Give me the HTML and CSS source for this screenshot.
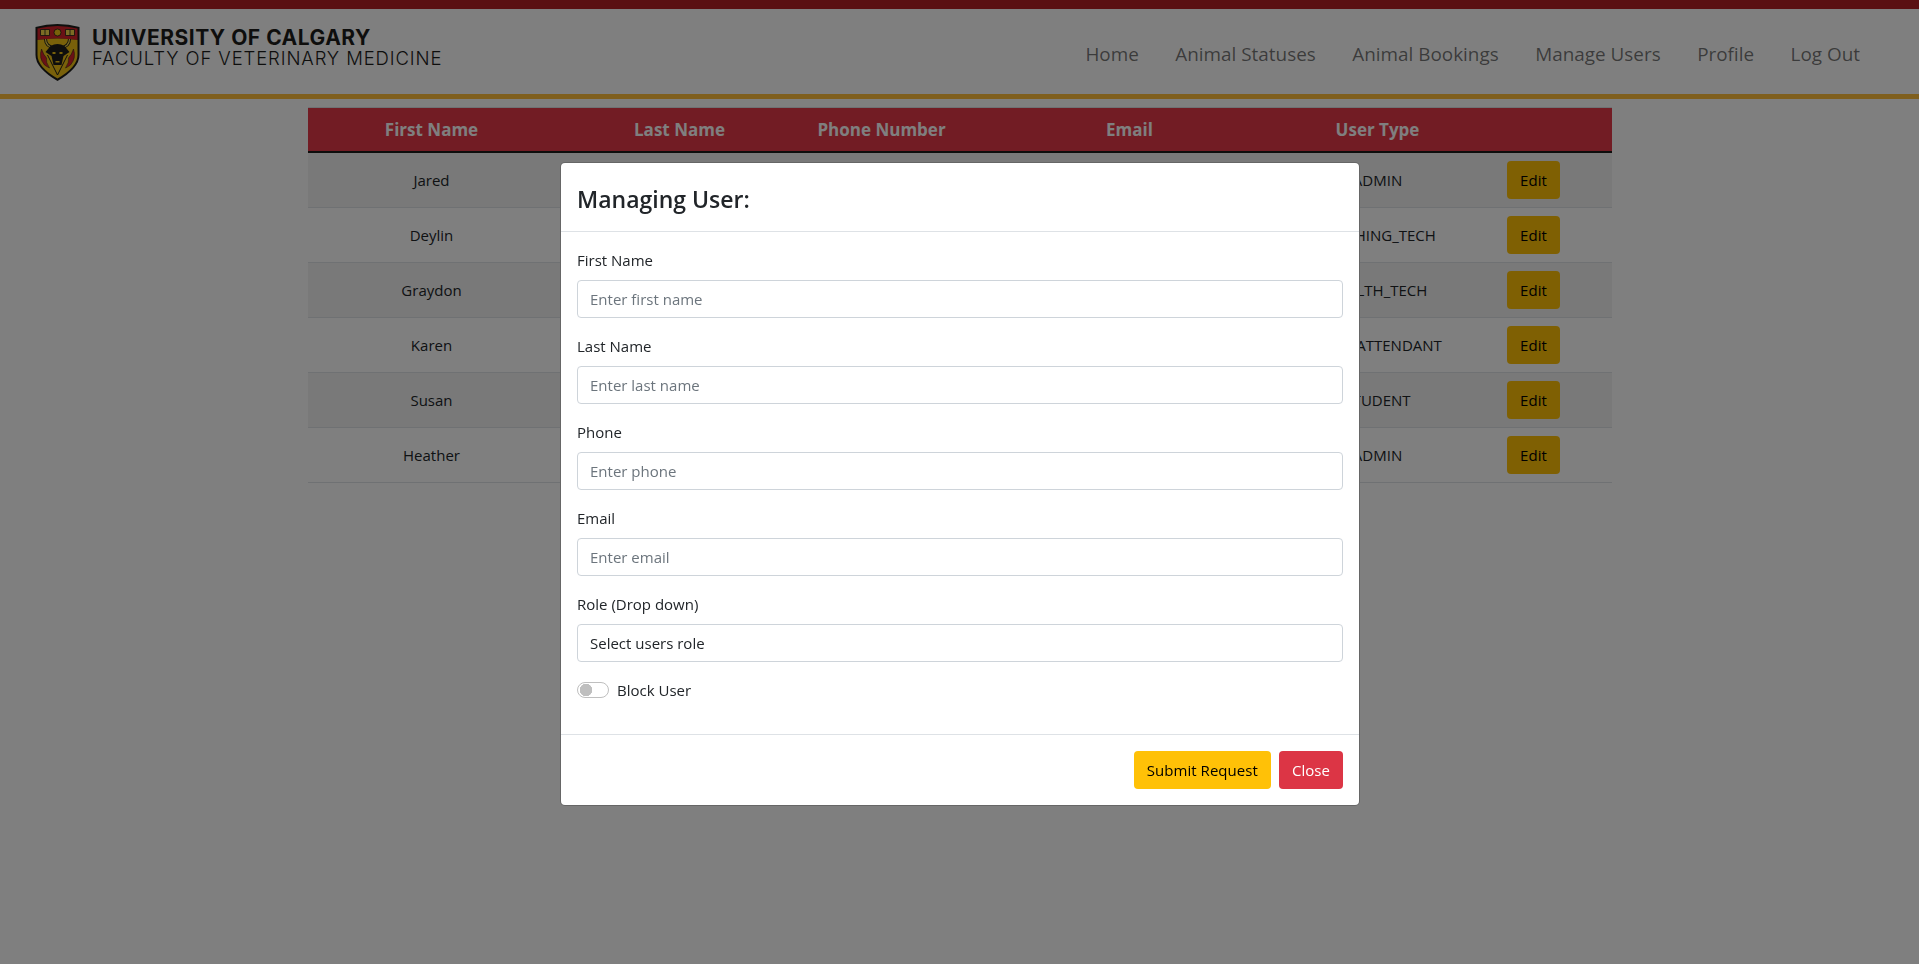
FILE: index.html
```html
<!DOCTYPE html>
<html>
<head>
    <title>Manage Users</title>
    <link rel="stylesheet" href="styles.css">
</head>
<body>
    <div class="top-stripe"></div>
    <header class="site-header">
        <a class="brand" href="#">
            <svg class="crest" viewBox="1 0 44 60" width="47" height="60">
                <path d="M1 5 Q23 -1 45 5 L45 33 Q45 46 23 59 Q1 46 1 33 Z" fill="#1d1d1b"/>
                <path d="M3 6.500 Q23 1.500 43 6.500 L43 18 Q23 15 3 18 Z" fill="#d5232a"/>
                <path d="M3 18 Q23 15 43 18 L43 33 Q43 45 23 56.500 Q3 45 3 33 Z" fill="#f2c314"/>
                <path d="M6 7.500h9v6H6zM31 7.500h9v6h-9z" fill="#f6d94a" stroke="#1d1d1b" stroke-width=".8"/>
                <path d="M10.500 7.500v6M35.500 7.500v6" stroke="#1d1d1b" stroke-width=".8"/>
                <circle cx="23" cy="10.500" r="3.500" fill="#f2c314" stroke="#1d1d1b" stroke-width=".8"/>
                <path d="M11 17 Q11 25 21 26M35 17 Q35 25 25 26" fill="none" stroke="#1d1d1b" stroke-width="3"/>
                <path d="M11 17 Q11 25 21 26M35 17 Q35 25 25 26" fill="none" stroke="#f6d94a" stroke-width="1.200"/>
                <path d="M16 24 Q23 20 30 24 L35 30 L29 34 L27 43 L19 43 L17 34 L11 30 Z" fill="#1d1d1b"/>
                <path d="M18 30h3v2h-3zM25 30h3v2h-3zM21 39h4v1.500h-4z" fill="#f2c314"/>
                <path d="M7 27 Q4 36 10 43 Q13 45 15 46 Q11 40 12 36 Q9 33 7 27 Z" fill="#d5232a" stroke="#1d1d1b" stroke-width=".5"/>
                <path d="M39 27 Q42 36 36 43 Q33 45 31 46 Q35 40 34 36 Q37 33 39 27 Z" fill="#d5232a" stroke="#1d1d1b" stroke-width=".5"/>
                <path d="M13 33 L23 53 L33 33" fill="none" stroke="#1d1d1b" stroke-width="1"/>
            </svg>
            <span class="brand-text">
                <span class="brand-uni">UNIVERSITY OF CALGARY</span>
                <span class="brand-faculty">FACULTY OF VETERINARY MEDICINE</span>
            </span>
        </a>
        <nav class="main-nav">
            <a href="#">Home</a>
            <a href="#">Animal Statuses</a>
            <a href="#">Animal Bookings</a>
            <a href="#">Manage Users</a>
            <a href="#">Profile</a>
            <a href="#">Log Out</a>
        </nav>
    </header>

    <table class="user-table">
        <thead>
            <tr>
                <th class="col-first">First Name</th>
                <th class="col-last">Last Name</th>
                <th class="col-phone">Phone Number</th>
                <th class="col-email">Email</th>
                <th class="col-type">User Type</th>
                <th class="col-action"></th>
            </tr>
        </thead>
        <tbody>
            <tr><td>Jared</td><td></td><td></td><td></td><td>ADMIN</td><td><button class="btn btn-yellow">Edit</button></td></tr>
            <tr><td>Deylin</td><td></td><td></td><td></td><td>TEACHING_TECH</td><td><button class="btn btn-yellow">Edit</button></td></tr>
            <tr><td>Graydon</td><td></td><td></td><td></td><td>HEALTH_TECH</td><td><button class="btn btn-yellow">Edit</button></td></tr>
            <tr><td>Karen</td><td></td><td></td><td></td><td>CARE_ATTENDANT</td><td><button class="btn btn-yellow">Edit</button></td></tr>
            <tr><td>Susan</td><td></td><td></td><td></td><td>STUDENT</td><td><button class="btn btn-yellow">Edit</button></td></tr>
            <tr><td>Heather</td><td></td><td></td><td></td><td>ADMIN</td><td><button class="btn btn-yellow">Edit</button></td></tr>
        </tbody>
    </table>

    <div class="backdrop"></div>

    <div class="modal">
        <div class="modal-header">
            <h4>Managing User:</h4>
        </div>
        <form class="modal-body">
            <div class="field">
                <label for="first">First Name</label>
                <input type="text" id="first" placeholder="Enter first name">
            </div>
            <div class="field">
                <label for="last">Last Name</label>
                <input type="text" id="last" placeholder="Enter last name">
            </div>
            <div class="field">
                <label for="phone">Phone</label>
                <input type="text" id="phone" placeholder="Enter phone">
            </div>
            <div class="field">
                <label for="email">Email</label>
                <input type="text" id="email" placeholder="Enter email">
            </div>
            <div class="field">
                <label for="role">Role (Drop down)</label>
                <select id="role">
                    <option>Select users role</option>
                </select>
            </div>
            <div class="field switch-field">
                <input type="checkbox" id="block">
                <label for="block">Block User</label>
            </div>
        </form>
        <div class="modal-footer">
            <button class="btn btn-yellow">Submit Request</button>
            <button class="btn btn-red">Close</button>
        </div>
    </div>
</body>
</html>
```

FILE: styles.css
```css
* {
    box-sizing: border-box;
}

body {
    margin: 0;
    min-height: 964px;
    background-color: white;
    color: #212529;
    font-family: "Open Sans", sans-serif;
    font-size: 15px;
    line-height: 24px;
}

.top-stripe {
    height: 9px;
    background-color: #b42024;
}

.site-header {
    height: 90px;
    display: flex;
    align-items: center;
    justify-content: space-between;
    padding: 0 59px 0 34px;
    border-bottom: 5px solid #ffbf3c;
}

.brand {
    display: flex;
    align-items: center;
    gap: 11px;
    color: #1d1d1b;
    text-decoration: none;
}

.brand-text {
    display: flex;
    flex-direction: column;
    margin-bottom: 8px;
}

.brand-uni {
    font-family: Inter, sans-serif;
    font-size: 21px;
    font-weight: 700;
    line-height: 21px;
    letter-spacing: .5px;
}

.brand-faculty {
    font-family: Inter, sans-serif;
    font-size: 18.500px;
    font-weight: 300;
    line-height: 20px;
    letter-spacing: .88px;
}

.main-nav {
    display: flex;
    gap: 36.500px;
    margin-top: 5px;
}

.main-nav a {
    font-size: 18.900px;
    color: rgba(0, 0, 0, .55);
    text-decoration: none;
}

.user-table {
    width: 1304px;
    margin: 9px auto 0;
    border-collapse: collapse;
    table-layout: fixed;
    box-shadow: 0 -1px 0 #dee2e6;
}

.user-table th {
    height: 44px;
    padding: 8px;
    background-color: #e43848;
    border-bottom: 2px solid #1d1d1b;
    color: white;
    font-size: 17px;
    font-weight: 700;
    text-align: center;
}

.user-table td {
    height: 55px;
    padding: 8px;
    border-bottom: 1px solid #dee2e6;
    text-align: center;
}

.user-table tbody tr:nth-child(odd) {
    background-color: rgba(0, 0, 0, .05);
}

.col-first, .col-last {
    width: 248px;
}

.col-phone {
    width: 156px;
}

.col-email {
    width: 340px;
}

.col-type {
    width: 156px;
}

.col-action {
    width: 156px;
}

.btn {
    height: 38px;
    padding: 6px 12px;
    border: 1px solid transparent;
    border-radius: 4px;
    font-family: inherit;
    font-size: 15px;
    line-height: 24px;
    letter-spacing: .05px;
}

.btn-yellow {
    background-color: #ffc107;
    color: black;
}

.btn-red {
    background-color: #dc3545;
    color: white;
}

.backdrop {
    position: fixed;
    inset: 0;
    background-color: rgba(0, 0, 0, .5);
}

.modal {
    position: fixed;
    top: 162px;
    left: 560px;
    width: 800px;
    background-color: white;
    border: 1px solid rgba(0, 0, 0, .6);
    border-radius: 5px;
}

.modal-header {
    padding: 18px 16px 14px;
    border-bottom: 1px solid #dee2e6;
}

.modal-header h4 {
    margin: 0;
    font-size: 23px;
    font-weight: 600;
    line-height: 36px;
}

.modal-body {
    padding: 16px;
}

.field {
    margin-bottom: 16px;
}

.field label {
    display: block;
    margin-bottom: 8px;
}

.field input[type="text"], .field select {
    display: block;
    width: 100%;
    height: 38px;
    padding: 6px 12px;
    background-color: white;
    border: 1px solid #ced4da;
    border-radius: 4px;
    color: #212529;
    font-family: inherit;
    font-size: 15px;
    appearance: none;
}

.field input::placeholder {
    color: #6c757d;
}

.switch-field {
    display: flex;
    align-items: center;
    gap: 8px;
}

.switch-field label {
    margin-bottom: 0;
}

.switch-field input {
    width: 32px;
    height: 16px;
    margin: 0;
    border: 1px solid #bfbfbf;
    border-radius: 8px;
    background: radial-gradient(circle at 8px 7px, #bfbfbf 6px, white 6.500px);
    appearance: none;
}

.modal-footer {
    display: flex;
    justify-content: flex-end;
    gap: 8px;
    padding: 16px;
    border-top: 1px solid #dee2e6;
}
```
